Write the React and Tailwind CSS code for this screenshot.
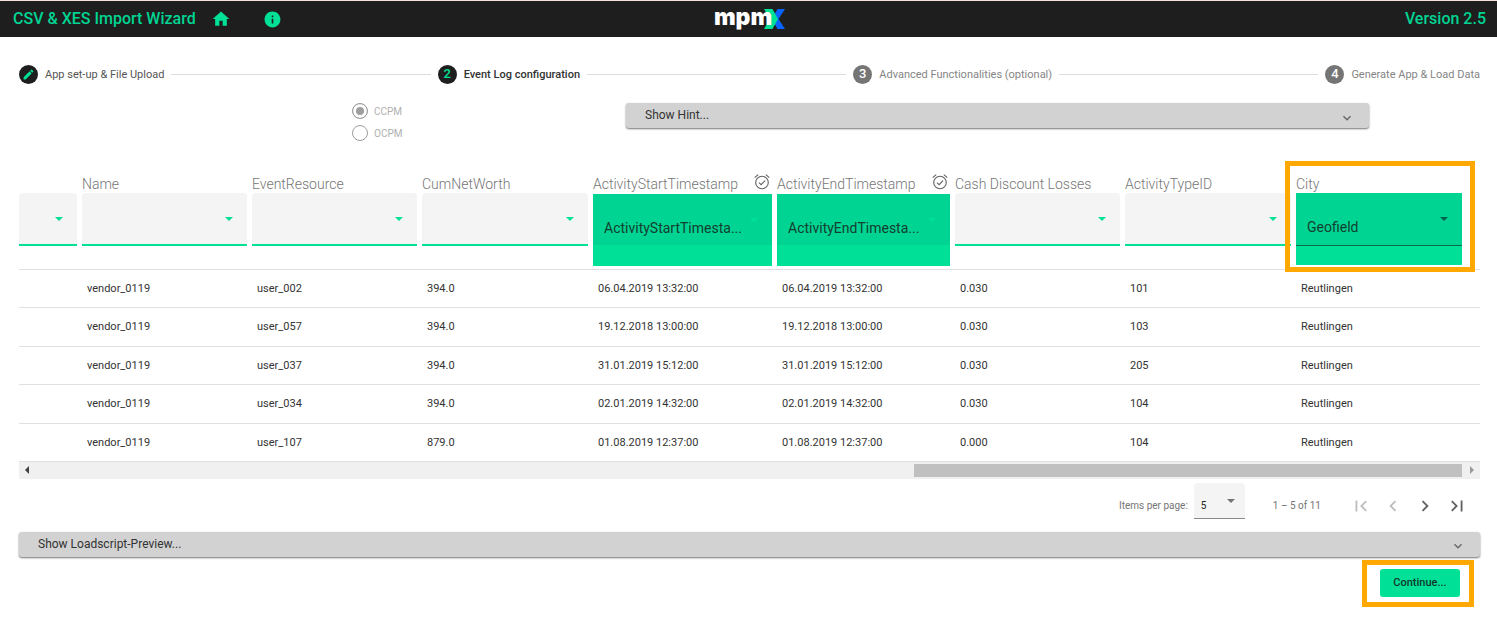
import React, { useState } from 'react';
import {
  MdHome,
  MdInfo,
  MdCreate,
  MdKeyboardArrowDown,
  MdFirstPage,
  MdLastPage,
  MdChevronLeft,
  MdChevronRight,
} from 'react-icons/md';

const columns = [
  { name: '', width: 'w-[63px]' },
  { name: 'Name', width: 'w-[170px]' },
  { name: 'EventResource', width: 'w-[170px]' },
  { name: 'CumNetWorth', width: 'w-[171px]' },
  { name: 'ActivityStartTimestamp', width: 'w-[184px]', type: 'ActivityStartTimesta...', timestamp: true },
  { name: 'ActivityEndTimestamp', width: 'w-[178px]', type: 'ActivityEndTimesta...', timestamp: true },
  { name: 'Cash Discount Losses', width: 'w-[170px]' },
  { name: 'ActivityTypeID', width: 'w-[171px]' },
  { name: 'City', width: '', type: 'Geofield', highlighted: true },
];

const rows = [
  ['', 'vendor_0119', 'user_002', '394.0', '06.04.2019 13:32:00', '06.04.2019 13:32:00', '0.030', '101', 'Reutlingen'],
  ['', 'vendor_0119', 'user_057', '394.0', '19.12.2018 13:00:00', '19.12.2018 13:00:00', '0.030', '103', 'Reutlingen'],
  ['', 'vendor_0119', 'user_037', '394.0', '31.01.2019 15:12:00', '31.01.2019 15:12:00', '0.030', '205', 'Reutlingen'],
  ['', 'vendor_0119', 'user_034', '394.0', '02.01.2019 14:32:00', '02.01.2019 14:32:00', '0.030', '104', 'Reutlingen'],
  ['', 'vendor_0119', 'user_107', '879.0', '01.08.2019 12:37:00', '01.08.2019 12:37:00', '0.000', '104', 'Reutlingen'],
];

const Caret = ({ className }) => (
  <svg viewBox="0 0 8 4" className={`pointer-events-none absolute h-1 w-2 ${className}`} fill="currentColor">
    <path d="M0 0h8L4 4z" />
  </svg>
);

const AlarmIcon = () => (
  <svg viewBox="0 0 16 16" className="mb-1 size-4" fill="none" stroke="#616161" strokeWidth="1.1">
    <circle cx="8" cy="8.500" r="6.300" />
    <path d="M5 8.700l2.100 2 4-4" />
    <path d="M.7 3.600L4.200.7M15.300 3.600L11.800.7" />
  </svg>
);

const Logo = () => (
  <div className="flex items-center" aria-label="mpmX">
    <span className="z-10 -mt-1 font-[Inter,sans-serif] text-[23px] leading-7 font-black text-white">mpm</span>
    <svg viewBox="0 0 21 20" className="-ml-2 h-5 w-[21px]">
      <path d="M13.500 0h7.500L14.500 10 21 20h-7.500L9 12V8z" fill="#0a63ff" />
      <path d="M0 0h8.500L14 10 8.500 20H0l6-10z" fill="#00e096" />
    </svg>
  </div>
);

const Step = ({ icon, label, active, done }) => (
  <li className="flex items-center gap-[7px]">
    <span
      className={`flex size-[19px] items-center justify-center rounded-full text-[13px] font-medium ${
        active || done ? 'bg-[#1e1e1e] text-[#00e096]' : 'bg-[#757575] text-white'
      }`}
    >
      {icon}
    </span>
    <span
      className={`pt-0.5 text-[11px] ${
        active ? 'font-medium text-[#333333]' : done ? 'text-[#555555]' : 'text-[#858585]'
      }`}
    >
      {label}
    </span>
  </li>
);

const StepLine = () => <li aria-hidden="true" className="h-px flex-1 bg-[#dcdcdc]" />;

const ExpansionPanel = ({ title }) => (
  <button className="flex h-[25px] w-full items-center justify-between rounded-[3px] bg-[#d2d2d2] pr-3.5 pl-[19px] text-left text-xs text-[#333333] shadow-[0_1px_2px_rgba(0,0,0,0.55)]">
    <span className="pb-px">{title}</span>
    <MdKeyboardArrowDown size={16} className="mt-1 text-[#666666]" />
  </button>
);

const ColumnSelect = ({ column }) => {
  const { name, type, timestamp, highlighted } = column;
  const filled = Boolean(type);

  return (
    <div className={filled ? 'h-[72px] bg-[#00e096]' : 'h-[72px]'}>
      <div className="relative">
        <select
          aria-label={name || 'Column type'}
          className={`block w-full appearance-none px-[11px] text-sm font-normal outline-none ${
            timestamp ? 'h-[51px]' : 'h-[53px]'
          } ${filled ? 'bg-[#00d492] pt-4 text-[#123f30]' : 'rounded-t border-b-2 border-[#00e096] bg-[#f4f4f4]'} ${
            highlighted ? 'border-b border-[#0a6b4b]' : ''
          }`}
        >
          <option>{type || ''}</option>
        </select>
        <Caret className={`top-6 right-[14px] ${highlighted ? 'text-[#04634a]' : 'text-[#00e096]'}`} />
      </div>
    </div>
  );
};

const PageButton = ({ label, disabled, children }) => (
  <button
    aria-label={label}
    disabled={disabled}
    className={`flex size-8 items-center justify-center ${disabled ? 'text-[#bdbdbd]' : 'text-[#616161]'}`}
  >
    {children}
  </button>
);

export default function App() {
  const [mode, setMode] = useState('CCPM');

  return (
    <div className="bg-white font-[Roboto,sans-serif] text-[#333333]">
      {/* Toolbar */}
      <header className="grid h-[37px] grid-cols-3 items-center border-t border-[#f3e3da] bg-[#1e1e1e] pr-[11px] pl-[13px] font-medium text-[#00d492]">
        <div className="flex items-center">
          <h1 className="text-base">CSV &amp; XES Import Wizard</h1>
          <a href="#home" aria-label="Home" className="ml-[15px] text-[#00e096]">
            <MdHome size={20} />
          </a>
          <a href="#info" aria-label="Info" className="ml-8 text-[#00e096]">
            <MdInfo size={19} />
          </a>
        </div>
        <div className="flex justify-center">
          <Logo />
        </div>
        <span className="text-right text-base">Version 2.5</span>
      </header>

      <main className="pt-[27px] pr-[17px] pl-[19px]">
        {/* Stepper */}
        <ol className="flex h-5 items-center gap-[7px]">
          <Step icon={<MdCreate size={13} />} label="App set-up & File Upload" done />
          <StepLine />
          <Step icon="2" label="Event Log configuration" active />
          <StepLine />
          <Step icon="3" label="Advanced Functionalities (optional)" />
          <StepLine />
          <Step icon="4" label="Generate App & Load Data" />
        </ol>

        <div className="mt-4 flex items-start pr-[111px] pl-[333px]">
          <fieldset className="w-[274px]">
            {['CCPM', 'OCPM'].map((option) => (
              <label key={option} className="flex h-[22px] items-center gap-1.5 text-[10px] text-[#b0b0b0]">
                <input
                  type="radio"
                  name="mode"
                  checked={mode === option}
                  onChange={() => setMode(option)}
                  className="size-4 appearance-none rounded-full border border-[#9e9e9e] checked:bg-[#9e9e9e] checked:shadow-[inset_0_0_0_3px_#ffffff]"
                />
                {option}
              </label>
            ))}
          </fieldset>
          <div className="flex-1 pt-[3px]">
            <ExpansionPanel title="Show Hint..." />
          </div>
        </div>

        {/* Data preview */}
        <table className="mt-[29px] w-full table-fixed border-collapse text-left">
          <thead>
            <tr className="h-24">
              {columns.map((column) => (
                <th key={column.name} className={`relative p-0 align-top font-light ${column.width}`}>
                  <div className={column.highlighted ? 'pr-[18px]' : 'pr-[5px]'}>
                    <div
                      className={`flex items-center justify-between text-sm whitespace-nowrap text-[#757575] ${
                        column.timestamp ? 'h-[21px] pr-0.5' : 'h-5 pt-0.5'
                      }`}
                    >
                      {column.name}
                      {column.timestamp && <AlarmIcon />}
                    </div>
                    <ColumnSelect column={column} />
                  </div>
                  {column.highlighted && (
                    <div className="pointer-events-none absolute -top-3 right-[5px] -bottom-[3px] -left-[11px] border-[5px] border-[#ffa800]" />
                  )}
                </th>
              ))}
            </tr>
          </thead>
          <tbody>
            {rows.map((row, i) => (
              <tr key={i} className="border-y border-[#e0e0e0] odd:h-[38px] even:h-[39px]">
                {row.map((cell, j) => (
                  <td key={j} className="p-0 pt-0.5 pl-[5px] text-[11px] whitespace-nowrap">
                    {cell}
                  </td>
                ))}
              </tr>
            ))}
          </tbody>
        </table>

        {/* Horizontal scrollbar */}
        <div className="flex h-[17px] items-center justify-between bg-[#f0f0f0] px-1.5">
          <svg viewBox="0 0 4 8" className="h-2 w-1" fill="#404040">
            <path d="M4 0v8L0 4z" />
          </svg>
          <div className="mr-2 ml-auto h-[13px] w-[37.8%] bg-[#c0c0c0]" />
          <svg viewBox="0 0 4 8" className="h-2 w-1" fill="#9a9a9a">
            <path d="M0 0v8l4-4z" />
          </svg>
        </div>

        {/* Paginator */}
        <div className="flex h-[53px] items-start justify-end pt-1 text-[10px] text-[#757575]">
          <label htmlFor="page-size" className="mr-1.5 leading-[46px]">
            Items per page:
          </label>
          <div className="relative">
            <select
              id="page-size"
              className="block h-9 w-[51px] appearance-none rounded-t border-b border-[#8a8a8a] bg-[#f4f4f4] px-[7px] pt-2.5 text-[10px] text-[#212121] outline-none"
            >
              <option>5</option>
            </select>
            <Caret className="top-4 right-[10px] text-[#757575]" />
          </div>
          <span className="mr-6 ml-7 leading-[46px]">1 – 5 of 11</span>
          <div className="mr-[7px] flex pt-[7px]">
            <PageButton label="First page" disabled>
              <MdFirstPage size={22} />
            </PageButton>
            <PageButton label="Previous page" disabled>
              <MdChevronLeft size={22} />
            </PageButton>
            <PageButton label="Next page">
              <MdChevronRight size={22} />
            </PageButton>
            <PageButton label="Last page">
              <MdLastPage size={22} />
            </PageButton>
          </div>
        </div>

        <ExpansionPanel title="Show Loadscript-Preview..." />

        <div className="mt-[3px] flex justify-end pr-1.5">
          <div className="border-[5px] border-[#ffa800] pt-1 pr-[9px] pb-[5px] pl-[13px]">
            <button className="h-7 w-20 rounded-[3px] bg-[#00e096] text-[11px] font-medium text-[#12382c]">
              Continue...
            </button>
          </div>
        </div>
      </main>
    </div>
  );
}
